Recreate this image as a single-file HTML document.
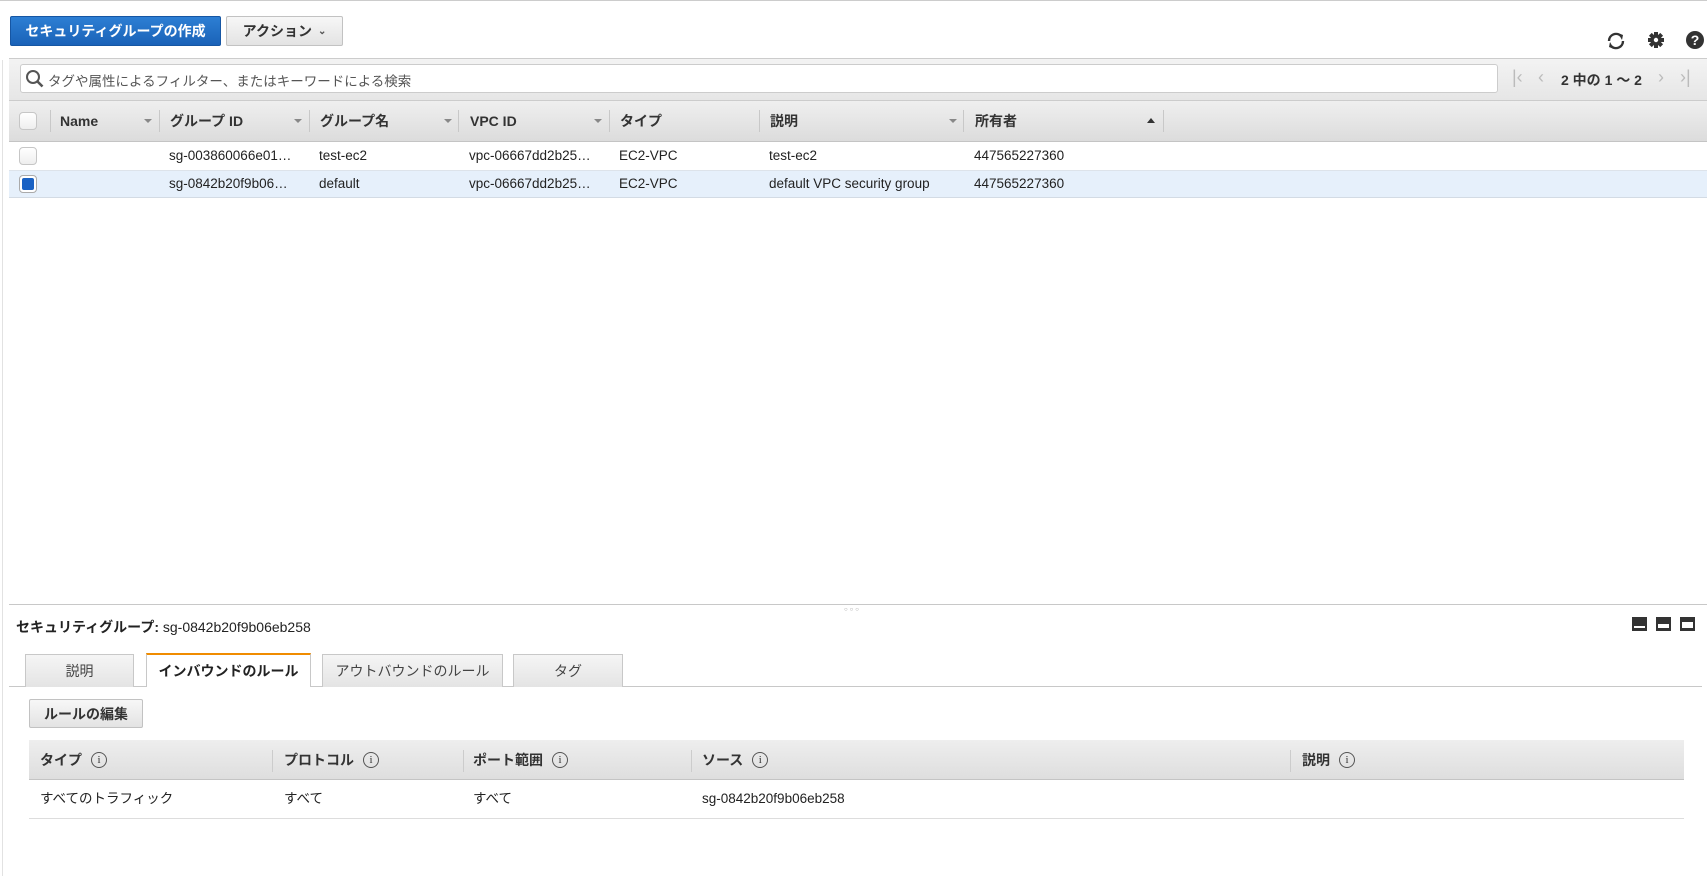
<!DOCTYPE html>
<html><head><meta charset="utf-8"><style>
*{box-sizing:border-box;margin:0;padding:0}
body{width:1707px;height:876px;background:#fff;font-family:"Liberation Sans","Noto Sans CJK JP",sans-serif;font-size:14px;color:#222;position:relative;overflow:hidden}
.a{position:absolute}
.btn{position:absolute;border-radius:2px;font-weight:bold;font-size:14px;display:flex;align-items:center;justify-content:center}
.gbtn{background:linear-gradient(#f7f7f7,#e3e3e3);border:1px solid #c2c2c2;color:#333}
.cb{position:absolute;width:18px;height:18px;border:1px solid #c6c6c6;border-radius:4px;background:linear-gradient(#fff,#eee)}
.hd{position:absolute;top:100px;height:42px;line-height:42px;font-weight:bold;color:#333;font-size:14px}
.sep{position:absolute;top:110px;width:1px;height:22px;background:#c8c8c8}
.dd{position:absolute;top:119px;width:0;height:0;border-left:4px solid transparent;border-right:4px solid transparent;border-top:4px solid #888}
.cell{position:absolute;font-size:13.5px;color:#222;white-space:nowrap;line-height:18px;height:18px}
.tab{position:absolute;top:654px;height:33px;border:1px solid #c8c8c8;border-bottom:none;background:linear-gradient(#f5f5f5,#e4e4e4);display:flex;align-items:center;justify-content:center;color:#444;font-size:14px}
.rh{position:absolute;top:740px;height:40px;font-weight:bold;color:#333;font-size:14px;display:flex;align-items:center}
.ic{display:inline-block;width:16px;height:16px;border:1px solid #555;border-radius:50%;font-size:11px;line-height:14px;text-align:center;font-weight:normal;margin-left:9px;font-family:"Liberation Serif",serif}
.rsep{position:absolute;top:750px;width:1px;height:22px;background:#ccc}
.pg{position:absolute;top:66px;font-size:18px;color:#bbb;font-weight:100;line-height:22px}
</style></head><body>
<div class="a" style="left:0;top:0;width:1707px;height:1px;background:#ccc"></div>
<div class="a" style="left:2px;top:60px;width:1px;height:816px;background:#e2e2e2"></div>
<div class="btn" style="left:10px;top:16px;width:211px;height:30px;background:linear-gradient(#2d7fd4,#1a62b8);border:1px solid #1656a3;color:#fff">セキュリティグループの作成</div>
<div class="btn gbtn" style="left:226px;top:16px;width:117px;height:30px">アクション <span style="font-size:10px;margin-left:6px;color:#555">&#8964;</span></div>
<svg class="a" style="left:1605px;top:30px" width="22" height="22" viewBox="0 0 22 22"><path d="M4 11a7 7 0 0 1 12-5" stroke="#333" stroke-width="2.4" fill="none"/><path d="M18 11a7 7 0 0 1-12 5" stroke="#333" stroke-width="2.4" fill="none"/><path d="M13 3l5 2-1 5z" fill="#333"/><path d="M9 19l-5-2 1-5z" fill="#333"/></svg>
<svg class="a" style="left:1647px;top:31px" width="18" height="18" viewBox="0 0 18 18"><g fill="#333"><circle cx="9" cy="9" r="5.5"/><rect x="7" y="1" width="4" height="16"/><rect x="1" y="7" width="16" height="4"/><rect x="7" y="1" width="4" height="16" transform="rotate(45 9 9)"/><rect x="7" y="1" width="4" height="16" transform="rotate(-45 9 9)"/></g><circle cx="9" cy="9" r="2.2" fill="#fff"/></svg>
<div class="a" style="left:1686px;top:31px;width:18px;height:18px;border-radius:50%;background:#333;color:#fff;font-weight:bold;font-size:14px;line-height:18px;text-align:center">?</div>

<div class="a" style="left:9px;top:58px;width:1698px;height:42px;background:linear-gradient(#f3f3f3,#e6e6e6);border-top:1px solid #ccc"></div>
<div class="a" style="left:20px;top:64px;width:1478px;height:29px;background:#fff;border:1px solid #ccc;border-radius:3px"></div>
<svg class="a" style="left:25px;top:69px" width="20" height="20" viewBox="0 0 20 20"><circle cx="8" cy="8" r="6" stroke="#555" stroke-width="2" fill="none"/><path d="M12.5 12.5l5 5" stroke="#555" stroke-width="2.6"/></svg>
<div class="a" style="left:48px;top:70px;font-size:13.5px;color:#555">タグや属性によるフィルター、またはキーワードによる検索</div>
<div class="pg" style="left:1512px">|&lsaquo;</div>
<div class="pg" style="left:1538px">&lsaquo;</div>
<div class="a" style="left:1561px;top:70px;font-size:14px;font-weight:bold;color:#333">2 中の 1 ～ 2</div>
<div class="pg" style="left:1658px">&rsaquo;</div>
<div class="pg" style="left:1680px">&rsaquo;|</div>

<div class="a" style="left:9px;top:100px;width:1698px;height:42px;background:linear-gradient(#efefef,#dcdcdc);border-top:1px solid #ccc;border-bottom:1px solid #c4c4c4"></div>
<div class="cb" style="left:19px;top:112px"></div>
<div class="sep" style="left:50px"></div>
<div class="hd" style="left:60px">Name</div><div class="dd" style="left:144px"></div><div class="sep" style="left:159px"></div>
<div class="hd" style="left:170px">グループ ID</div><div class="dd" style="left:294px"></div><div class="sep" style="left:309px"></div>
<div class="hd" style="left:320px">グループ名</div><div class="dd" style="left:444px"></div><div class="sep" style="left:458px"></div>
<div class="hd" style="left:470px">VPC ID</div><div class="dd" style="left:594px"></div><div class="sep" style="left:609px"></div>
<div class="hd" style="left:620px">タイプ</div><div class="sep" style="left:759px"></div>
<div class="hd" style="left:770px">説明</div><div class="dd" style="left:949px"></div><div class="sep" style="left:963px"></div>
<div class="hd" style="left:975px">所有者</div>
<div class="a" style="left:1147px;top:118px;border-left:4px solid transparent;border-right:4px solid transparent;border-bottom:5px solid #333"></div>
<div class="sep" style="left:1163px"></div>

<div class="a" style="left:9px;top:170px;width:1698px;height:1px;background:#dde3ea"></div>
<div class="cb" style="left:19px;top:147px"></div>
<div class="cell" style="left:169px;top:147px">sg-003860066e01…</div>
<div class="cell" style="left:319px;top:147px">test-ec2</div>
<div class="cell" style="left:469px;top:147px">vpc-06667dd2b25…</div>
<div class="cell" style="left:619px;top:147px">EC2-VPC</div>
<div class="cell" style="left:769px;top:147px">test-ec2</div>
<div class="cell" style="left:974px;top:147px">447565227360</div>
<div class="a" style="left:9px;top:171px;width:1698px;height:27px;background:#e6f0fb;border-bottom:1px solid #d3dbe4"></div>
<div class="a" style="left:19px;top:175px;width:18px;height:18px;border:1px solid #aaa;border-radius:4px;background:#fff"></div>
<div class="a" style="left:22px;top:178px;width:12px;height:12px;border-radius:2px;background:#1a62c4"></div>
<div class="cell" style="left:169px;top:175px">sg-0842b20f9b06…</div>
<div class="cell" style="left:319px;top:175px">default</div>
<div class="cell" style="left:469px;top:175px">vpc-06667dd2b25…</div>
<div class="cell" style="left:619px;top:175px">EC2-VPC</div>
<div class="cell" style="left:769px;top:175px">default VPC security group</div>
<div class="cell" style="left:974px;top:175px">447565227360</div>

<div class="a" style="left:9px;top:604px;width:1698px;height:1px;background:#c8c8c8"></div>
<div class="a" style="left:844px;top:607px;font-size:6px;color:#999;letter-spacing:2px">○○○</div>
<div class="a" style="left:16px;top:617px;font-size:14px;color:#222"><b>セキュリティグループ:</b> sg-0842b20f9b06eb258</div>
<div class="a" style="left:1632px;top:617px;width:15px;height:14px;background:#333"><div class="a" style="left:2px;top:9px;width:11px;height:2px;background:#fff"></div></div>
<div class="a" style="left:1656px;top:617px;width:15px;height:14px;background:#333"><div class="a" style="left:2px;top:7px;width:11px;height:4px;background:#fff"></div></div>
<div class="a" style="left:1680px;top:617px;width:15px;height:14px;background:#333"><div class="a" style="left:2px;top:5px;width:11px;height:6px;background:#fff"></div></div>

<div class="a" style="left:9px;top:686px;width:1693px;height:1px;background:#c8c8c8"></div>
<div class="tab" style="left:25px;width:109px">説明</div>
<div class="tab" style="left:146px;width:165px;height:34px;top:653px;background:#fff;border-top:2px solid #f08c00;font-weight:bold;color:#222">インバウンドのルール</div>
<div class="tab" style="left:322px;width:181px">アウトバウンドのルール</div>
<div class="tab" style="left:513px;width:110px">タグ</div>

<div class="btn gbtn" style="left:29px;top:699px;width:114px;height:29px">ルールの編集</div>
<div class="a" style="left:29px;top:740px;width:1655px;height:40px;background:linear-gradient(#eeeeee,#dedede);border-bottom:1px solid #c4c4c4"></div>
<div class="rh" style="left:40px">タイプ<span class="ic">i</span></div>
<div class="rsep" style="left:272px"></div>
<div class="rh" style="left:284px">プロトコル<span class="ic">i</span></div>
<div class="rsep" style="left:463px"></div>
<div class="rh" style="left:473px">ポート範囲<span class="ic">i</span></div>
<div class="rsep" style="left:691px"></div>
<div class="rh" style="left:702px">ソース<span class="ic">i</span></div>
<div class="rsep" style="left:1290px"></div>
<div class="rh" style="left:1302px">説明<span class="ic">i</span></div>
<div class="cell" style="left:40px;top:790px">すべてのトラフィック</div>
<div class="cell" style="left:284px;top:790px">すべて</div>
<div class="cell" style="left:473px;top:790px">すべて</div>
<div class="cell" style="left:702px;top:790px">sg-0842b20f9b06eb258</div>
<div class="a" style="left:29px;top:818px;width:1655px;height:1px;background:#ddd"></div>
</body></html>
